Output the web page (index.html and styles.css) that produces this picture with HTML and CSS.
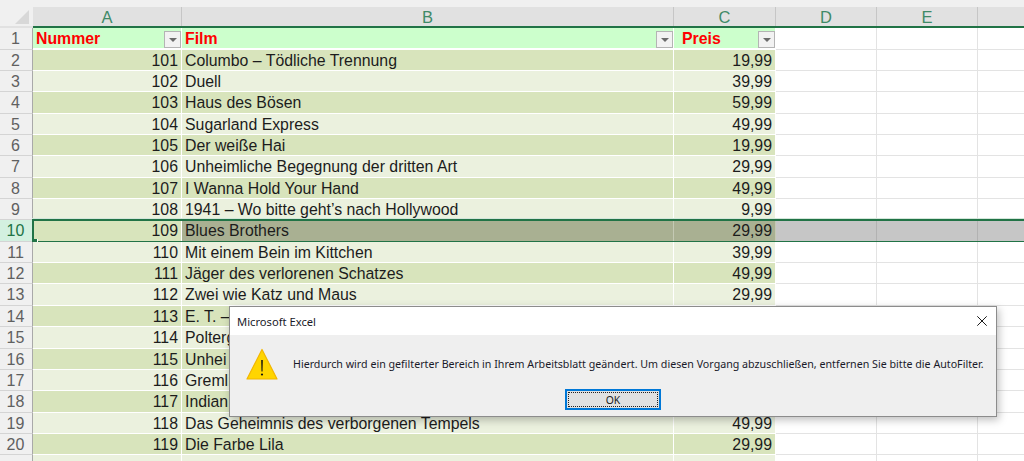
FILE: index.html
```html
<!DOCTYPE html>
<html lang="de">
<head>
<meta charset="utf-8">
<title>Microsoft Excel</title>
<link rel="stylesheet" href="styles.css">
</head>
<body>
<div class="topbar"></div>
<div class="sheet">
  <div class="row colheads">
    <div class="corner"><svg width="14" height="14" viewBox="0 0 14 14"><path d="M14 0V14H0Z" fill="#d8d8d8"/></svg></div>
    <div class="ch a">A</div><div class="ch b">B</div><div class="ch c">C</div><div class="ch d">D</div><div class="ch e">E</div><div class="ch f"></div>
  </div>
  <div class="row head">
    <div class="rh">1</div>
    <div class="cell a hd">Nummer<span class="fb"><i></i></span></div>
    <div class="cell b hd">Film<span class="fb"><i></i></span></div>
    <div class="cell c hd">Preis<span class="fb"><i></i></span></div>
    <div class="cell d"></div><div class="cell e"></div><div class="cell f"></div>
  </div>
  <div class="row dk"><div class="rh">2</div><div class="cell a">101</div><div class="cell b">Columbo – Tödliche Trennung</div><div class="cell c">19,99</div><div class="cell d"></div><div class="cell e"></div><div class="cell f"></div></div>
  <div class="row lt"><div class="rh">3</div><div class="cell a">102</div><div class="cell b">Duell</div><div class="cell c">39,99</div><div class="cell d"></div><div class="cell e"></div><div class="cell f"></div></div>
  <div class="row dk"><div class="rh">4</div><div class="cell a">103</div><div class="cell b">Haus des Bösen</div><div class="cell c">59,99</div><div class="cell d"></div><div class="cell e"></div><div class="cell f"></div></div>
  <div class="row lt"><div class="rh">5</div><div class="cell a">104</div><div class="cell b">Sugarland Express</div><div class="cell c">49,99</div><div class="cell d"></div><div class="cell e"></div><div class="cell f"></div></div>
  <div class="row dk"><div class="rh">6</div><div class="cell a">105</div><div class="cell b">Der weiße Hai</div><div class="cell c">19,99</div><div class="cell d"></div><div class="cell e"></div><div class="cell f"></div></div>
  <div class="row lt"><div class="rh">7</div><div class="cell a">106</div><div class="cell b">Unheimliche Begegnung der dritten Art</div><div class="cell c">29,99</div><div class="cell d"></div><div class="cell e"></div><div class="cell f"></div></div>
  <div class="row dk"><div class="rh">8</div><div class="cell a">107</div><div class="cell b">I Wanna Hold Your Hand</div><div class="cell c">49,99</div><div class="cell d"></div><div class="cell e"></div><div class="cell f"></div></div>
  <div class="row lt"><div class="rh">9</div><div class="cell a">108</div><div class="cell b">1941 – Wo bitte geht’s nach Hollywood</div><div class="cell c">9,99</div><div class="cell d"></div><div class="cell e"></div><div class="cell f"></div></div>
  <div class="row dk sel"><div class="rh">10</div><div class="cell a">109</div><div class="cell b">Blues Brothers</div><div class="cell c">29,99</div><div class="cell d"></div><div class="cell e"></div><div class="cell f"></div><div class="selbox"><span class="handle"></span></div></div>
  <div class="row lt"><div class="rh">11</div><div class="cell a">110</div><div class="cell b">Mit einem Bein im Kittchen</div><div class="cell c">39,99</div><div class="cell d"></div><div class="cell e"></div><div class="cell f"></div></div>
  <div class="row dk"><div class="rh">12</div><div class="cell a">111</div><div class="cell b">Jäger des verlorenen Schatzes</div><div class="cell c">49,99</div><div class="cell d"></div><div class="cell e"></div><div class="cell f"></div></div>
  <div class="row lt"><div class="rh">13</div><div class="cell a">112</div><div class="cell b">Zwei wie Katz und Maus</div><div class="cell c">29,99</div><div class="cell d"></div><div class="cell e"></div><div class="cell f"></div></div>
  <div class="row dk"><div class="rh">14</div><div class="cell a">113</div><div class="cell b">E. T. –</div><div class="cell c"></div><div class="cell d"></div><div class="cell e"></div><div class="cell f"></div></div>
  <div class="row lt"><div class="rh">15</div><div class="cell a">114</div><div class="cell b">Polterg</div><div class="cell c"></div><div class="cell d"></div><div class="cell e"></div><div class="cell f"></div></div>
  <div class="row dk"><div class="rh">16</div><div class="cell a">115</div><div class="cell b">Unhei</div><div class="cell c"></div><div class="cell d"></div><div class="cell e"></div><div class="cell f"></div></div>
  <div class="row lt"><div class="rh">17</div><div class="cell a">116</div><div class="cell b">Gremli</div><div class="cell c"></div><div class="cell d"></div><div class="cell e"></div><div class="cell f"></div></div>
  <div class="row dk"><div class="rh">18</div><div class="cell a">117</div><div class="cell b">Indian</div><div class="cell c"></div><div class="cell d"></div><div class="cell e"></div><div class="cell f"></div></div>
  <div class="row lt"><div class="rh">19</div><div class="cell a">118</div><div class="cell b">Das Geheimnis des verborgenen Tempels</div><div class="cell c">49,99</div><div class="cell d"></div><div class="cell e"></div><div class="cell f"></div></div>
  <div class="row dk"><div class="rh">20</div><div class="cell a">119</div><div class="cell b">Die Farbe Lila</div><div class="cell c">29,99</div><div class="cell d"></div><div class="cell e"></div><div class="cell f"></div></div>
  <div class="row lt"><div class="rh"></div><div class="cell a"></div><div class="cell b"></div><div class="cell c"></div><div class="cell d"></div><div class="cell e"></div><div class="cell f"></div></div>
</div>

<div class="dialog">
  <div class="titlebar">
    <span class="title">Microsoft Excel</span>
    <svg class="close" width="10" height="10" viewBox="0 0 10 10"><path d="M.3.3 9.7 9.7M9.7.3.3 9.7" stroke="#1a1a1a" stroke-width="1" fill="none"/></svg>
  </div>
  <div class="dbody">
    <div class="msgline">
      <svg class="warn" width="32" height="32" viewBox="0 0 32 32">
        <path d="M16 1.5 31 31H1Z" fill="#ffd500" stroke="#f2b600" stroke-width="1.2" stroke-linejoin="round"/>
        <path d="M15.2 12h1.6l-.3 11.5h-1Z" fill="#111"/>
        <circle cx="16" cy="26.5" r="1.1" fill="#111"/>
      </svg>
      <p class="msg">Hierdurch wird ein gefilterter Bereich in Ihrem Arbeitsblatt geändert. Um diesen Vorgang abzuschließen, entfernen Sie bitte die AutoFilter.</p>
    </div>
    <div class="actions"><button class="ok"><span>OK</span></button></div>
  </div>
</div>
</body>
</html>
```
FILE: styles.css
```css
* { box-sizing: border-box; }
html, body { margin: 0; height: 100%; }
body { width: 1024px; height: 461px; overflow: hidden; background: #fff; position: relative; font-family: "Liberation Sans", Arial, sans-serif; }

.topbar { height: 7px; background: #f0f0f0; }
.sheet { display: flex; flex-direction: column; }
.row { display: flex; flex: none; height: 21.37px; position: relative; }

.colheads { height: 21px; background: #e1e1e1; border-bottom: 2px solid #217346; }
.corner { width: 33px; background: #f0f0f0; display: flex; align-items: flex-end; justify-content: flex-end; padding: 0 4px 2px 0; border-bottom: 2px solid #e1e1e1; margin-bottom: -2px; height: 21px; }
.ch { color: #3f8a68; font-size: 16.5px; text-align: center; line-height: 20px; border-right: 1px solid #c6c6c6; height: 19px; }

.a { width: 149px; }
.b { width: 492px; }
.c { width: 102px; }
.d { width: 101px; }
.e { width: 101px; }
.f { flex: 1; }
.ch.f { border-right: 0; }

.row.head { height: 21.5px; }

.rh { width: 33px; flex: none; background: #f0f0f0; border-right: 1px solid #a9a9a9; border-bottom: 1px solid #d4d4d4; color: #606060; font-size: 16px; text-align: center; line-height: 22px; padding-right: 1px; }

.cell { position: relative; color: #1c1c1c; font-size: 15.85px; line-height: 22px; padding: 0 3px; white-space: nowrap; overflow: hidden; background: #fff; border-right: 1px solid #e3e3e3; border-bottom: 1px solid #e3e3e3; }
.cell.a, .cell.c { text-align: right; padding-right: 3px; }
.cell.f { border-right: 0; }

.dk .a, .dk .b, .dk .c { background: #d8e4bc; border-color: #fff; }
.lt .a, .lt .b, .lt .c { background: #ebf1de; border-color: #fff; }

.head .a, .head .b, .head .c { background: #ccffcc; border-color: #fff; border-bottom-width: 2px; }
.hd { color: #ff0000; font-weight: 700; text-align: left !important; padding-left: 3px; }
.head .c { padding-left: 8px; }
.fb { position: absolute; right: 0; top: 3px; width: 17px; height: 17px; background: #f2f2f2; border: 1px solid #b4b4b4; display: flex; align-items: center; justify-content: center; }
.fb i { display: block; width: 0; height: 0; border-left: 4px solid transparent; border-right: 4px solid transparent; border-top: 4px solid #6a6a6a; }

.sel .rh { background: #d3f0e0; color: #217346; }
.sel .b, .sel .c { background: #a9b092; border-color: #c4c9b4; }
.sel .d, .sel .e, .sel .f { background: #c6c6c6; border-color: #b2b2b2; }
.selbox { position: absolute; left: 32px; right: -4px; top: -1.5px; bottom: -1.5px; border: 2px solid #217346; pointer-events: none; box-shadow: 0 -1px 0 #d3e6da; }
.handle { position: absolute; left: -2px; bottom: -3px; width: 5px; height: 5px; background: #217346; box-shadow: 1px 0 0 #fff; }

.dialog { position: absolute; left: 229px; top: 306px; width: 768px; height: 111px; display: flex; flex-direction: column; border: 1px solid #8c8c8c; background: #efefef; box-shadow: 2px 3px 8px rgba(0,0,0,.25); font-family: "Noto Sans", "Open Sans", sans-serif; color: #1a1a2a; }
.titlebar { height: 28px; flex: none; background: #fff; display: flex; align-items: center; justify-content: space-between; padding: 0 9.5px 0 7px; }
.title { font-size: 11.2px; }
.close { display: block; }
.dbody { flex: 1; display: flex; flex-direction: column; }
.msgline { display: flex; align-items: center; padding: 4px 0 0 16px; height: 53px; }
.warn { flex: none; }
.msg { margin: 0 0 0 15px; font-size: 10.68px; white-space: nowrap; }
.actions { display: flex; justify-content: flex-end; padding: 1px 335px 0 0; }
.ok { width: 96px; height: 21px; padding: 1px; background: #e1e1e1; border: 2px solid #0078d7; font-family: inherit; font-size: 10.4px; color: #1a1a1a; }
.ok span { display: flex; width: 100%; height: 100%; align-items: center; justify-content: center; border: 1px dotted #222; }
```
